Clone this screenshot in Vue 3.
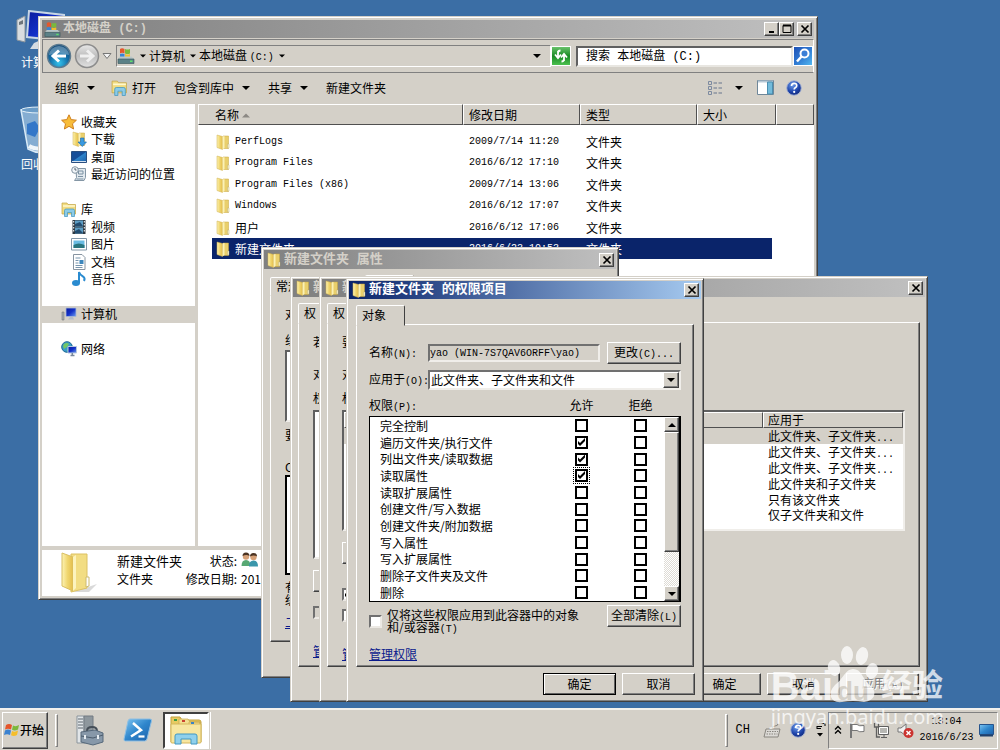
<template>
  <!-- Shared icon shapes -->
  <svg class="defs" width="0" height="0" aria-hidden="true">
    <defs>
      <linearGradient id="gFolder" x1="0" x2="1">
        <stop offset="0" stop-color="#fdf3b4" />
        <stop offset="0.5" stop-color="#f0d66f" />
        <stop offset="1" stop-color="#e3bd4c" />
      </linearGradient>
      <linearGradient id="gBlue" x1="0" y1="0" x2="1" y2="1">
        <stop offset="0" stop-color="#7fc6f2" />
        <stop offset="0.5" stop-color="#2f86cc" />
        <stop offset="1" stop-color="#1d5fa8" />
      </linearGradient>
      <linearGradient id="gScreen" x1="0" y1="0" x2="1" y2="1">
        <stop offset="0" stop-color="#0a1a9c" />
        <stop offset="0.5" stop-color="#1230c8" />
        <stop offset="1" stop-color="#6d9cf0" />
      </linearGradient>
      <radialGradient id="gBack" cx="0.5" cy="0.8" r="0.8">
        <stop offset="0" stop-color="#35c3ec" />
        <stop offset="0.5" stop-color="#146fa8" />
        <stop offset="1" stop-color="#0f4573" />
      </radialGradient>
      <linearGradient id="gGrey" x1="0" y1="0" x2="0" y2="1">
        <stop offset="0" stop-color="#e8e8e8" />
        <stop offset="0.5" stop-color="#bdbdbd" />
        <stop offset="1" stop-color="#e2e2e2" />
      </linearGradient>
      <radialGradient id="gHelp" cx="0.4" cy="0.3" r="0.8">
        <stop offset="0" stop-color="#6b9bea" />
        <stop offset="0.6" stop-color="#1c41a8" />
        <stop offset="1" stop-color="#10246c" />
      </radialGradient>
    </defs>
    <symbol id="folder" viewBox="0 0 16 16">
      <path d="M8 2h5.500v12.500H7z" fill="#e9cf6c" stroke="#c9a63c" stroke-width="0.500" />
      <path d="M2 1l5.500 1.500v13L2 13.500z" fill="url(#gFolder)" stroke="#cfae4b" stroke-width="0.500" />
      <path d="M7.500 2.500L9.500 2v12l-2 1.500z" fill="#fbf1b5" />
      <path d="M12.500 10h1.500v4h-1.500z" fill="#f8f3d3" stroke="#b9a765" stroke-width="0.400" />
    </symbol>
    <symbol id="library" viewBox="0 0 16 16">
      <path d="M1 2h5l1 1.500h7.500V13H1z" fill="#f2dc81" stroke="#c3a343" stroke-width="0.700" />
      <path d="M2 5h12" stroke="#fff8cf" stroke-width="1.500" />
      <path d="M3.500 15.500V9.500q0-1.500 1.500-1.500h7q1.500 0 1.500 1.500v6h-3v-4H6.500v4z" fill="#8bcbe8" stroke="#3f94bd" stroke-width="0.700" />
    </symbol>
    <symbol id="drive" viewBox="0 0 18 18">
      <path d="M3 2q2-1.500 4.500 0v4.500Q5 5 3 6.500z" fill="#e4572b" />
      <path d="M8 2q2.500 1 5 0v4.500q-2.500 1-5 0z" fill="#7ab93b" />
      <path d="M3 7q2-1 4.500 0v4q-2.500-1-4.500 0z" fill="#3a83d2" />
      <path d="M8 7q2.500 1 5 0v4q-2.500 1-5 0z" fill="#f3bd2c" />
      <path d="M1 12l2-2.500h11.500L17 12z" fill="#b9c6c7" />
      <path d="M1 12h16v4.500H1z" fill="#5c8187" stroke="#36565c" stroke-width="0.600" />
      <path d="M13 13.500h2.500v1.500H13z" fill="#5be36a" />
    </symbol>
    <symbol id="computer" viewBox="0 0 16 16">
      <path d="M1 6h2v8H1z" fill="#a9adb0" stroke="#686c70" stroke-width="0.500" />
      <path d="M5 2h10v8.500H5z" fill="url(#gScreen)" stroke="#a4b6d4" stroke-width="0.800" />
      <path d="M9 11h3l1 2.500H7z" fill="#b4bcc8" />
    </symbol>
    <symbol id="help" viewBox="0 0 16 16">
      <circle cx="8" cy="8" r="7.300" fill="url(#gHelp)" stroke="#a7b4d4" />
      <path d="M5.500 6q0-2.700 2.600-2.700T10.700 5.700Q10.700 7 9.200 7.700 8.200 8.200 8.200 9.600" fill="none" stroke="#fff" stroke-width="1.700" />
      <circle cx="8.200" cy="11.900" r="1.100" fill="#fff" />
    </symbol>
    <symbol id="cross" viewBox="0 0 10 10">
      <path d="M1.500 1.500l7 7M8.500 1.500l-7 7" stroke="#000" stroke-width="1.700" />
    </symbol>
    <symbol id="down" viewBox="0 0 8 8">
      <path d="M0 2h8L4 6z" fill="#000" />
    </symbol>
  </svg>

  <main class="desktop">
    <a class="shortcut" href="#">
      <svg width="50" height="42" viewBox="0 0 50 42">
        <path d="M1 10l8-4v26l-8-2z" fill="#d9dde0" stroke="#8b959d" />
        <path d="M3 12l4-2v4l-4 1z" fill="#6d757b" />
        <path d="M13 1l35 4v26l-37-4z" fill="url(#gScreen)" stroke="#c7d6e5" stroke-width="2" />
        <path d="M18 33q8-5 16 0l4 6H14z" fill="#d5dce2" />
      </svg>
      <span>计算机</span>
    </a>
    <a class="shortcut bin" href="#">
      <svg width="50" height="48" viewBox="0 0 50 48">
        <path d="M5 4h36l-7 41q-11 4-22-2z" fill="#a5c8e5" fill-opacity="0.700" stroke="#d8eaf7" stroke-width="1.500" />
        <ellipse cx="23" cy="4" rx="18" ry="3" fill="#6c9dc8" stroke="#e4f1fa" />
        <path d="M11 18l8-3 5 7-5 9-8-3z" fill="#3477c8" />
        <path d="M13 40q6 4 20 2" stroke="#f0f6fa" stroke-width="4" fill="none" />
      </svg>
      <span>回收站</span>
    </a>

    <!-- Explorer -->
    <section class="window explorer">
      <header class="titlebar">
        <svg width="17" height="17"><use href="#drive" /></svg>
        <h1>本地磁盘 (C:)</h1>
        <button class="cap" aria-label="最小化"><svg width="10" height="10"><path d="M2 8h5" stroke="#000" stroke-width="2" /></svg></button>
        <button class="cap" aria-label="最大化"><svg width="10" height="10"><path d="M1 1.500h8v7H1z" fill="none" stroke="#000" /><path d="M1 1.500h8" stroke="#000" stroke-width="2" /></svg></button>
        <button class="cap last" aria-label="关闭"><svg width="10" height="10"><use href="#cross" /></svg></button>
      </header>

      <div class="address-row">
        <div class="nav-buttons">
          <button class="round" aria-label="后退">
            <svg width="26" height="26" viewBox="0 0 26 26">
              <circle cx="13" cy="13" r="11.500" fill="url(#gBack)" stroke="#5c7a8f" stroke-width="1.500" />
              <path d="M3 12a10 9 0 0 1 20 0q-10-3-20 0z" fill="#fff" fill-opacity="0.300" />
              <path d="M20 13H8M13 7.500L7 13l6 5.500" fill="none" stroke="#fff" stroke-width="3" />
            </svg>
          </button>
          <button class="round" aria-label="前进">
            <svg width="26" height="26" viewBox="0 0 26 26">
              <circle cx="13" cy="13" r="11.500" fill="url(#gGrey)" stroke="#8c8c8c" stroke-width="1.500" />
              <path d="M6 13h12M13 7.500l6 5.500-6 5.500" fill="none" stroke="#efefef" stroke-width="3" />
            </svg>
          </button>
          <svg width="10" height="8" viewBox="0 0 10 8"><path d="M1 1.500h8L5 6.500z" fill="#f4f4f4" stroke="#777" /></svg>
        </div>
        <div class="address">
          <svg width="18" height="18"><use href="#drive" /></svg>
          <svg class="tri" width="6" height="6" viewBox="0 0 8 8"><use href="#down" /></svg>
          <a href="#">计算机</a>
          <svg class="tri" width="6" height="6" viewBox="0 0 8 8"><use href="#down" /></svg>
          <a href="#">本地磁盘 <span class="mono">(C:)</span></a>
          <svg class="tri" width="6" height="6" viewBox="0 0 8 8"><use href="#down" /></svg>
          <svg class="tri end" width="8" height="8"><use href="#down" /></svg>
        </div>
        <button class="refresh" aria-label="刷新">
          <svg width="18" height="18" viewBox="0 0 18 18">
            <path d="M6 4v6M3 7.500l3 3.500 3-3.500M8.500 3.500Q6 3.500 6 6" fill="none" stroke="#fff" stroke-width="1.800" />
            <path d="M12 14V8M9 10.500L12 7l3 3.500M9.500 14.500q2.500 0 2.500-2.500" fill="none" stroke="#fff" stroke-width="1.800" />
          </svg>
        </button>
        <input class="search" type="text" placeholder="搜索 本地磁盘 (C:)" aria-label="搜索" />
        <button class="search-go" aria-label="开始搜索">
          <svg width="18" height="18" viewBox="0 0 18 18">
            <circle cx="10.500" cy="6.500" r="4" fill="#3b7fd6" stroke="#fff" stroke-width="2" />
            <path d="M7.500 9.500L3 14.500" stroke="#fff" stroke-width="2.500" />
          </svg>
        </button>
      </div>

      <div class="toolbar">
        <button>组织<svg class="drop" width="8" height="8"><use href="#down" /></svg></button>
        <button class="open"><svg width="17" height="17"><use href="#library" /></svg>打开</button>
        <button>包含到库中<svg class="drop" width="8" height="8"><use href="#down" /></svg></button>
        <button>共享<svg class="drop" width="8" height="8"><use href="#down" /></svg></button>
        <button>新建文件夹</button>
        <div class="views">
          <button aria-label="更改视图">
            <svg width="16" height="14" viewBox="0 0 16 14">
              <g fill="none" stroke="#7d8aa0">
                <path d="M1.500.5h3v3h-3zM1.500 5.500h3v3h-3zM1.500 10.500h3v3h-3z" />
                <path d="M6.500 2h3.500M11.500 2H15M6.500 7h3.500M11.500 7H15M6.500 12h3.500M11.500 12H15" stroke="#66758c" />
              </g>
            </svg>
          </button>
          <svg width="8" height="8"><use href="#down" /></svg>
          <button class="pane" aria-label="预览窗格">
            <svg width="17" height="15" viewBox="0 0 17 15">
              <path d="M.5.5h16v14H.5z" fill="#fff" stroke="#6f8799" />
              <path d="M1 1.500h15" stroke="#b8c9d6" stroke-width="2" />
              <path d="M10.500 2h5v12h-5z" fill="#73bbdb" stroke="#4b8fb0" />
            </svg>
          </button>
          <button aria-label="帮助"><svg width="16" height="16"><use href="#help" /></svg></button>
        </div>
      </div>

      <div class="explorer-body">
        <nav class="tree">
          <template v-for="item in tree" :key="item.name">
            <div v-if="item.first" class="space"></div>
            <a href="#" :class="{ child: item.child, current: item.current }">
              <svg width="16" height="16" viewBox="0 0 16 16">
                <path v-if="item.icon === 'star'" d="M8 .8l2.200 4.800 5.200.6-3.900 3.600 1.100 5.200L8 12.300 3.400 15l1.100-5.200L.6 6.200l5.200-.6z" fill="#f8bd3a" stroke="#cf7f1d" />
                <g v-else-if="item.icon === 'download'">
                  <use href="#folder" />
                  <path d="M9.500 7h3.500v4h2.500l-4.200 4.500L7 11h2.500z" fill="#3a9ae0" stroke="#1e68a5" stroke-width="0.600" />
                </g>
                <g v-else-if="item.icon === 'desktop'">
                  <path d="M.5 2.500h15v11H.5z" fill="url(#gBlue)" stroke="#2a4f80" />
                  <path d="M1 3h14L2 12H1z" fill="#164f99" />
                  <path d="M1 12.500h14" stroke="#d3e1ef" />
                </g>
                <g v-else-if="item.icon === 'recent'">
                  <path d="M5 2.500h9.500v9L13 14.500H3.500l2-3z" fill="#e2e9ee" stroke="#8496a5" />
                  <path d="M7.500 5h4.500v3H7.500zM7 10.500h5M5.500 13h7" fill="none" stroke="#7b91a3" />
                  <circle cx="4" cy="4" r="3.300" fill="#f1f5f8" stroke="#8394a2" />
                  <path d="M4 2v2h1.500" fill="none" stroke="#50616e" />
                </g>
                <use v-else-if="item.icon === 'library'" href="#library" />
                <g v-else-if="item.icon === 'video'">
                  <path d="M1.500 1h13v14h-13z" fill="#2e3943" />
                  <path d="M4 1.500h8v6H4zM4 8.500h8v6H4z" fill="#5c9cc3" />
                  <path d="M4 5l5-2 3 4H4zM4 12l4-2 4 4H4z" fill="#234d70" />
                  <path d="M2.700 2v12M13.300 2v12" stroke="#fff" stroke-dasharray="1.500 1.500" />
                </g>
                <g v-else-if="item.icon === 'picture'">
                  <path d="M.5 2.500h15v11.500H.5z" fill="#fff" stroke="#8397a8" />
                  <path d="M2.500 4.500h11v7.500h-11z" fill="#69bbe3" />
                  <path d="M2.500 9q5-3 11 0v3h-11z" fill="#28757f" />
                </g>
                <g v-else-if="item.icon === 'document'">
                  <path d="M2.500.5H11l3 3v12H2.500z" fill="#fff" stroke="#8794a1" />
                  <path d="M4.500 4h5M4.500 6.500h3M4.500 9h3M4.500 11.500h7M4.500 13.500h7" stroke="#7895ad" />
                  <path d="M8.500 6h4v4h-4z" fill="#3d87bd" />
                </g>
                <g v-else-if="item.icon === 'music'">
                  <ellipse cx="5" cy="12" rx="4" ry="3" fill="#2a8bd0" />
                  <path d="M8 12V1q1 3 4 4.500 2.500 1.500 1 4.500" fill="none" stroke="#2a8bd0" stroke-width="2" />
                </g>
                <use v-else-if="item.icon === 'computer'" href="#computer" />
                <g v-else>
                  <circle cx="6" cy="6" r="5.300" fill="#3a9bc9" stroke="#1d6a93" />
                  <path d="M3 3q3-2 5 0L6 6 3 8 2 5zM6 8l3 1-2 2z" fill="#73c765" />
                  <path d="M7 5.500h8.500V12H7z" fill="url(#gScreen)" stroke="#b6c8de" />
                  <path d="M9.500 14.500h4M11.300 12v2" stroke="#78889c" stroke-width="1.500" />
                </g>
              </svg>
              {{ item.name }}
            </a>
          </template>
        </nav>

        <table class="files">
          <colgroup>
            <col class="c-name" />
            <col class="c-date" />
            <col class="c-type" />
            <col class="c-size" />
            <col />
          </colgroup>
          <thead>
            <tr>
              <th>名称 <svg width="8" height="5" viewBox="0 0 8 5"><path d="M0 4.500h8L4 .5z" fill="#8c8984" /></svg></th>
              <th>修改日期</th>
              <th>类型</th>
              <th>大小</th>
              <th></th>
            </tr>
          </thead>
          <tbody>
            <tr v-for="file in files" :key="file.name" :class="{ selected: file.selected }">
              <td>
                <div class="file-name">
                  <svg width="16" height="16"><use href="#folder" /></svg>
                  <span :class="{ mono: file.latin }">{{ file.name }}</span>
                </div>
              </td>
              <td class="mono">{{ file.date }}</td>
              <td>文件夹</td>
              <td></td>
              <td></td>
            </tr>
          </tbody>
        </table>
      </div>

      <footer class="details">
        <svg width="40" height="42" viewBox="0 0 40 42">
          <path d="M26 36l12-4-8 8H14z" fill="#000" fill-opacity="0.150" />
          <path d="M12 2h16v34L12 40z" fill="#f2dd83" stroke="#dcc162" />
          <path d="M3 1l11 4v34L3 34z" fill="url(#gFolder)" stroke="#d9bf63" />
          <path d="M14 5l3-2v33l-3 3z" fill="#fcf3be" />
          <path d="M27 25h3v9l-3 1z" fill="#fff" stroke="#cdbb70" />
        </svg>
        <div class="detail-names">
          <strong>新建文件夹</strong>
          <span>文件夹</span>
        </div>
        <dl>
          <dt>状态:</dt>
          <dd>
            <svg width="18" height="16" viewBox="0 0 18 16">
              <circle cx="5" cy="4.500" r="3.200" fill="#d6a178" />
              <path d="M1.500 4q0-3.500 3.500-3.500T8.500 4q-3-2-7 0z" fill="#4b3323" />
              <path d="M.5 14q0-6 4.500-6t4.500 6z" fill="#57a873" />
              <circle cx="12.500" cy="5" r="3.200" fill="#d6a178" />
              <path d="M9 4.500Q9 1 12.500 1T16 4.500q-3-2-7 0z" fill="#4b3323" />
              <path d="M8 14.500q0-6 4.500-6t4.500 6z" fill="#3a96ab" />
            </svg>
          </dd>
          <dt>修改日期:</dt>
          <dd>2016</dd>
        </dl>
      </footer>
    </section>

    <!-- Folder properties -->
    <section class="window props">
      <header class="titlebar">
        <svg width="16" height="16"><use href="#folder" /></svg>
        <h2>新建文件夹 属性</h2>
        <button class="cap last" aria-label="关闭"><svg width="10" height="10"><use href="#cross" /></svg></button>
      </header>
      <div class="tabs">
        <button class="tab">常规</button>
        <button class="tab raised" aria-label="安全"></button>
      </div>
      <div class="sheet">
        <p class="p-object">对象</p>
        <p>组</p>
        <div class="well users"></div>
        <p class="p-edit">要</p>
        <p class="p-perm">CR</p>
        <div class="well perms"></div>
        <p class="tight">有关<br />级别</p>
        <a class="link" href="#">二</a>
      </div>
    </section>

    <!-- Advanced security, two stacked copies -->
    <section class="window advanced back">
      <header class="titlebar">
        <svg width="16" height="16"><use href="#folder" /></svg>
        <h2>新</h2>
      </header>
      <div class="tabs"><button class="tab">权</button></div>
      <div class="sheet">
        <p class="a-first">若</p>
        <p class="a-second">对</p>
        <p>权</p>
        <div class="well entries"></div>
        <button class="push edit" aria-label="更改权限"></button>
        <input class="dim" type="checkbox" disabled aria-label="包括可从该对象的父项继承的权限" />
        <a class="link" href="#">管</a>
      </div>
    </section>

    <section class="window advanced front">
      <header class="titlebar">
        <svg width="16" height="16"><use href="#folder" /></svg>
        <h2>新</h2>
        <button class="cap last" aria-label="关闭"><svg width="10" height="10"><use href="#cross" /></svg></button>
      </header>
      <div class="tabs"><button class="tab">权</button></div>
      <div class="sheet">
        <p class="a-first">要</p>
        <p class="a-second">对</p>
        <p>权</p>
        <div class="well entries">
          <table>
            <thead>
              <tr><th class="wide"></th><th>应用于</th></tr>
            </thead>
            <tbody>
              <tr v-for="(scope, i) in scopes" :key="i" :class="{ picked: i === 0 }">
                <td></td>
                <td>{{ scope.text }}<span v-if="scope.more" class="mono">...</span></td>
              </tr>
            </tbody>
          </table>
        </div>
        <button class="push edit" aria-label="添加"></button>
        <input type="checkbox" checked aria-label="包括继承的权限" />
        <input type="checkbox" aria-label="替换子对象权限" />
        <a class="link" href="#">管</a>
      </div>
      <div class="actions">
        <button class="push">确定</button>
        <button class="push">取消</button>
        <button class="push" disabled>应用<span class="mono">(A)</span></button>
      </div>
    </section>

    <!-- Permission entry -->
    <section class="window entry">
      <header class="titlebar active">
        <svg width="16" height="16"><use href="#folder" /></svg>
        <h2>新建文件夹 的权限项目</h2>
        <button class="cap last" aria-label="关闭"><svg width="10" height="10"><use href="#cross" /></svg></button>
      </header>
      <div class="tabs"><button class="tab">对象</button></div>
      <div class="sheet">
        <div class="field">
          <label for="name">名称<span class="mono">(N):</span></label>
          <input id="name" type="text" value="yao (WIN-7S7QAV6ORFF\yao)" readonly />
          <button class="push">更改<span class="mono">(C)...</span></button>
        </div>
        <div class="field second">
          <label for="scope">应用于<span class="mono">(O):</span></label>
          <div class="combo">
            <select id="scope">
              <option>此文件夹、子文件夹和文件</option>
            </select>
            <span class="combo-arrow"><svg width="8" height="8"><use href="#down" /></svg></span>
          </div>
        </div>
        <div class="perm-head">
          <span>权限<span class="mono">(P):</span></span>
          <span class="col">允许</span>
          <span class="col">拒绝</span>
        </div>
        <div class="perm-box">
          <table>
            <tbody>
              <tr v-for="perm in permissions" :key="perm.name">
                <th scope="row">{{ perm.name }}</th>
                <td>
                  <input
                    v-model="perm.allow"
                    type="checkbox"
                    :class="{ focused: perm.focused }"
                    :aria-label="perm.name + ' 允许'"
                  />
                </td>
                <td><input v-model="perm.deny" type="checkbox" :aria-label="perm.name + ' 拒绝'" /></td>
              </tr>
            </tbody>
          </table>
          <div class="scrollbar">
            <button aria-label="向上"><svg class="flip" width="8" height="8"><use href="#down" /></svg></button>
            <div class="thumb"></div>
            <button aria-label="向下"><svg width="8" height="8"><use href="#down" /></svg></button>
          </div>
        </div>
        <div class="apply-row">
          <input id="only" type="checkbox" />
          <label for="only">仅将这些权限应用到此容器中的对象<br />和/或容器<span class="mono">(T)</span></label>
          <button class="push">全部清除<span class="mono">(L)</span></button>
        </div>
        <a class="link" href="#">管理权限</a>
      </div>
      <div class="actions">
        <button class="push default">确定</button>
        <button class="push">取消</button>
      </div>
    </section>

    <!-- Taskbar -->
    <footer class="taskbar">
      <button class="start">
        <svg width="16" height="16" viewBox="0 0 16 16">
          <path d="M2 3q3-2 6 0L7 7.500Q4 6 1 7.500z" fill="#e5552a" />
          <path d="M9 3.500q3 1.500 6-.5l-1 4.500q-3 2-6 .3z" fill="#7cb83a" />
          <path d="M1 8.500q3-2 6 0L6 13Q3 11.500 0 13z" fill="#3b82d0" />
          <path d="M8 9q3 1.500 6-.5L13 13q-3 2-6 .3z" fill="#f5be2b" />
        </svg>
        开始
      </button>
      <div class="grip"></div>
      <button class="quick server" aria-label="服务器管理器">
        <svg width="30" height="32" viewBox="0 0 30 32">
          <path d="M2 2h7v27H2z" fill="#e1e5e8" stroke="#8b959c" />
          <path d="M9 2h9v25l-9 2z" fill="#8e979d" stroke="#727b82" />
          <path d="M3 5h5M3 8h5M3 11h5M3 14h5" stroke="#5c666e" />
          <path d="M12 17q0-4 5-4t5 4" fill="none" stroke="#454e57" stroke-width="2" />
          <path d="M6 18l14-2 8 3v9l-10 3-12-3z" fill="#8798a9" stroke="#56687a" />
          <path d="M6 22l12 2 10-3" fill="none" stroke="#4c5c6c" />
          <path d="M10 21v4M23 21v4" stroke="#e5ebf0" stroke-width="2" />
        </svg>
      </button>
      <button class="quick" aria-label="PowerShell">
        <svg width="30" height="26" viewBox="0 0 30 26">
          <path d="M7 2h20q2 0 1.500 2L24 22q-.5 2-2.500 2h-19Q.5 24 1 22L5 4q.5-2 2-2z" fill="url(#gBlue)" stroke="#8fbfe3" />
          <path d="M10 6l8 7-10 6.500" fill="none" stroke="#fff" stroke-width="2.500" />
          <path d="M15.500 19.500h6" stroke="#fff" stroke-width="2.200" />
        </svg>
      </button>
      <button class="quick running" aria-label="资源管理器">
        <svg width="34" height="30" viewBox="0 0 34 30">
          <path d="M2 2h9l2 3h17q2 0 2 2v20H2z" fill="#e8cb62" stroke="#c2a13f" />
          <path d="M10 4h9l2 3h10v4H10zM20 7h11v4H20z" fill="#f3df91" stroke="#c6a84d" stroke-width="0.700" />
          <path d="M2 9h30v18q0 1-1 1H3q-1 0-1-1z" fill="#f7e6a0" stroke="#d4b75c" />
          <path d="M5 4h3v2H5z" fill="#3e9b42" /><path d="M13 5h3v2h-3z" fill="#cb4331" /><path d="M22 7h3v2h-3z" fill="#3c83c4" />
          <path d="M6 29v-8q0-2 2-2h18q2 0 2 2v8h-6v-5H12v5z" fill="#8fd0ec" stroke="#4298c2" />
        </svg>
      </button>

      <div class="tray">
        <div class="grip"></div>
        <span class="mono lang">CH</span>
        <button aria-label="键盘">
          <svg width="18" height="15" viewBox="0 0 18 15">
            <path d="M3 6h14l-2 8H1z" fill="#dcdad6" stroke="#88857f" />
            <path d="M4 8.500h11M3.500 11h11" stroke="#88857f" stroke-dasharray="1.500 1" />
            <path d="M9 6q0-3 3-3t3-2.500" fill="none" stroke="#88857f" />
          </svg>
        </button>
        <button class="tray-help" aria-label="帮助"><svg width="16" height="16"><use href="#help" /></svg></button>
        <svg class="lang-opts" width="10" height="16" viewBox="0 0 10 16">
          <path d="M3 1.500h6M9 1v3M1 4.500h5M1 4v3M1 6.500h4" fill="none" stroke="#000" />
          <path d="M1 11h6l-3 3.500z" fill="#000" />
        </svg>
        <div class="notify">
          <svg width="8" height="10" viewBox="0 0 8 10"><path d="M1 4.500L4 1.500l3 3M1 8.500l3-3 3 3" fill="none" stroke="#000" stroke-width="1.300" /></svg>
          <svg class="flag" width="17" height="17" viewBox="0 0 17 17">
            <path d="M2 1v15" stroke="#777" stroke-width="2" />
            <path d="M3 2.500h5q2 2 7 1v6q-5 1-7-1H3z" fill="#fff" stroke="#777" />
          </svg>
          <svg class="net" width="17" height="17" viewBox="0 0 17 17">
            <path d="M5.500 4.500h10v8h-10z" fill="#b7b7b3" stroke="#5f5f5f" />
            <path d="M6.500 5.500h8v6h-8z" fill="none" stroke="#fff" />
            <path d="M8 15.500h6M11 13v2" stroke="#5f5f5f" />
            <path d="M1.500 1v4h4V1M3.500 5v10H7" fill="none" stroke="#5f5f5f" stroke-width="1.300" />
          </svg>
          <svg class="vol" width="17" height="17" viewBox="0 0 17 17">
            <path d="M1 6h3l5-4v12l-5-4H1z" fill="#f2f2f2" stroke="#777" />
            <circle cx="11.500" cy="11" r="5" fill="#cb3430" />
            <path d="M9.500 9l4 4M13.500 9l-4 4" stroke="#fff" stroke-width="1.500" />
          </svg>
          <div class="clock mono"><span>13:04</span><span>2016/6/23</span></div>
          <svg width="15" height="13" viewBox="0 0 15 13">
            <path d="M.5.5h14v10H.5z" fill="url(#gBlue)" stroke="#27548c" />
            <path d="M1 11.500h13" stroke="#20406b" stroke-width="2" />
          </svg>
        </div>
      </div>
    </footer>

    <!-- Watermark -->
    <div class="watermark">
      <div class="brand">
        <span>Bai</span>
        <div class="paw">
          <svg width="52" height="58" viewBox="0 0 52 58">
            <g fill="#fff">
              <ellipse cx="7" cy="22" rx="6" ry="8" transform="rotate(-15 7 22)" />
              <ellipse cx="20" cy="9" rx="6" ry="9" />
              <ellipse cx="35" cy="10" rx="6" ry="9" transform="rotate(12 35 10)" />
              <ellipse cx="45" cy="25" rx="6" ry="8" transform="rotate(15 45 25)" />
              <path d="M26 23q6 0 9 6t8 10q6 6 4 11t-10 6q-11-2-22 0-9 1-11-5t4-12q5-4 9-10t9-6z" />
            </g>
          </svg>
          <span>du</span>
        </div>
        <span class="cn">经验</span>
      </div>
      <div class="site">jingyan.baidu.com</div>
    </div>
  </main>
</template>

<script setup>
import { reactive } from 'vue'

/**
 * Navigation tree; `first` opens a new group.
 */
const tree = [
  { name: '收藏夹', icon: 'star' },
  { name: '下载', icon: 'download', child: true },
  { name: '桌面', icon: 'desktop', child: true },
  { name: '最近访问的位置', icon: 'recent', child: true },
  { name: '库', icon: 'library', first: true },
  { name: '视频', icon: 'video', child: true },
  { name: '图片', icon: 'picture', child: true },
  { name: '文档', icon: 'document', child: true },
  { name: '音乐', icon: 'music', child: true },
  { name: '计算机', icon: 'computer', first: true, current: true },
  { name: '网络', icon: 'network', first: true }
]

const files = [
  { name: 'PerfLogs', date: '2009/7/14 11:20', latin: true },
  { name: 'Program Files', date: '2016/6/12 17:10', latin: true },
  { name: 'Program Files (x86)', date: '2009/7/14 13:06', latin: true },
  { name: 'Windows', date: '2016/6/12 17:07', latin: true },
  { name: '用户', date: '2016/6/12 17:06' },
  { name: '新建文件夹', date: '2016/6/23 10:53', selected: true }
]

const scopes = [
  { text: '此文件夹、子文件夹', more: true },
  { text: '此文件夹、子文件夹', more: true },
  { text: '此文件夹、子文件夹', more: true },
  { text: '此文件夹和子文件夹' },
  { text: '只有该文件夹' },
  { text: '仅子文件夹和文件' }
]

/**
 * Rows of the permission list.
 */
const permissions = reactive([
  { name: '完全控制', allow: false, deny: false },
  { name: '遍历文件夹/执行文件', allow: true, deny: false },
  { name: '列出文件夹/读取数据', allow: true, deny: false },
  { name: '读取属性', allow: true, deny: false, focused: true },
  { name: '读取扩展属性', allow: false, deny: false },
  { name: '创建文件/写入数据', allow: false, deny: false },
  { name: '创建文件夹/附加数据', allow: false, deny: false },
  { name: '写入属性', allow: false, deny: false },
  { name: '写入扩展属性', allow: false, deny: false },
  { name: '删除子文件夹及文件', allow: false, deny: false },
  { name: '删除', allow: false, deny: false }
])
</script>

<style>
body {
  margin: 0;
  overflow: hidden;
}
</style>

<style scoped>
.desktop {
  position: relative;
  display: flex;
  flex-direction: column;
  height: 100vh;
  overflow: hidden;
  background: #3b6ea5;
  color: #000;
  font-family: "Noto Sans CJK SC", "Liberation Sans", sans-serif;
  font-size: 12px;
  line-height: 16px;
}
.desktop * {
  box-sizing: border-box;
}
.defs {
  position: absolute;
}
svg {
  flex: none;
  display: block;
}
h1,
h2,
p,
dl,
dd {
  margin: 0;
}
a {
  color: inherit;
  text-decoration: none;
}
button,
input,
select {
  margin: 0;
  padding: 0;
  border: 0;
  border-radius: 0;
  background: transparent;
  color: inherit;
  font: inherit;
}
.mono {
  font-family: "Liberation Mono", monospace;
  font-size: 10px;
}

/* Desktop shortcuts */
.shortcut {
  position: absolute;
  left: 16px;
  top: 10px;
  display: flex;
  flex-direction: column;
  gap: 2px;
  color: #fff;
}
.shortcut span {
  padding-left: 5px;
}
.shortcut.bin {
  top: 106px;
}

/* Window chrome */
.window {
  position: absolute;
  isolation: isolate;
  display: flex;
  flex-direction: column;
  padding: 2px;
  border: 1px solid;
  border-color: #d4d0c8 #404040 #404040 #d4d0c8;
  background: #d4d0c8;
  box-shadow: inset 1px 1px #fff, inset -1px -1px #808080;
}
.titlebar {
  display: flex;
  flex: none;
  align-items: center;
  gap: 2px;
  height: 18px;
  padding: 0 2px;
  background: linear-gradient(90deg, #808080, #c0c0c0);
  color: #d4d0c8;
}
.titlebar.active {
  background: linear-gradient(90deg, #0a246a, #a6caf0);
  color: #fff;
}
.titlebar h1,
.titlebar h2 {
  flex: 1;
  font-family: "Liberation Mono", "Noto Sans CJK SC", monospace;
  font-size: 13px;
  font-weight: 700;
  line-height: 18px;
  white-space: nowrap;
}
.titlebar h1 {
  font-size: 12px;
}
.cap {
  display: flex;
  align-items: center;
  justify-content: center;
  width: 15px;
  height: 14px;
  margin-left: -2px;
}
.cap.last {
  margin-left: 1px;
}
.cap,
.push,
.combo-arrow,
.scrollbar button,
.thumb {
  border: 1px solid;
  border-color: #fff #404040 #404040 #fff;
  background: #d4d0c8;
  box-shadow: inset -1px -1px #808080;
}

/* Explorer */
.explorer {
  left: 38px;
  top: 16px;
  width: 780px;
  height: 584px;
  padding: 3px;
}
.address-row {
  display: flex;
  flex: none;
  align-items: center;
  height: 34px;
  margin-top: 1px;
  padding-left: 3px;
  border: 1px solid;
  border-color: #808080 #fff #808080 #808080;
}
.nav-buttons {
  display: flex;
  align-items: center;
  gap: 2px;
  margin-right: 4px;
}
.address {
  display: flex;
  flex: 1;
  align-items: center;
  height: 22px;
  padding-right: 9px;
  border: 1px solid;
  border-color: #808080 #fff #fff #808080;
}
.address a {
  padding: 0 5px 0 3px;
  white-space: nowrap;
}
.address svg + .tri {
  margin-left: 5px;
}
.address .tri + .tri.end {
  margin-left: auto;
}
.refresh,
.search-go {
  display: flex;
  flex: none;
  width: 20px;
  height: 20px;
  padding: 0;
  border: 1px solid #fff;
  background: linear-gradient(#69c26b, #188a24 50%, #4cc04f);
}
.search {
  width: 217px;
  height: 21px;
  margin-left: 5px;
  padding: 2px 0 0 8px;
  border: 2px solid;
  border-color: #606060 #e8e6e1 #e8e6e1 #606060;
  background: #fff;
  font-family: "Liberation Mono", "Noto Sans CJK SC", monospace;
}
.search::placeholder {
  color: #000;
  opacity: 1;
}
.search-go {
  background: linear-gradient(135deg, #1d50b4, #2f79d2 50%, #51b7ef);
}
.toolbar {
  display: flex;
  flex: none;
  align-items: center;
  gap: 18px;
  height: 31px;
  padding: 0 12px 2px 13px;
}
.toolbar button {
  display: flex;
  align-items: center;
  white-space: nowrap;
}
.toolbar .drop {
  margin-left: 8px;
}
.toolbar .open {
  gap: 4px;
  margin-left: -2px;
}
.views {
  display: flex;
  align-items: center;
  gap: 12px;
  margin-left: auto;
}
.views .pane {
  margin-left: 2px;
}
.explorer-body {
  display: flex;
  flex: 1;
  min-height: 0;
  background: #fff;
}
.tree {
  display: grid;
  grid-template-rows: repeat(14, 1fr);
  flex: none;
  width: 156px;
  padding: 9px 0 188px;
  border-right: 3px solid #d4d0c8;
}
.tree a {
  display: flex;
  align-items: center;
  gap: 4px;
  padding-left: 19px;
  white-space: nowrap;
}
.tree a.child {
  padding-left: 29px;
}
.tree .current {
  background: #d4d0c8;
}
.files {
  flex: 1;
  align-self: flex-start;
  table-layout: fixed;
  width: 100%;
  border-collapse: separate;
  border-spacing: 0;
}
.c-name {
  width: 265px;
}
.c-date,
.c-type {
  width: 117px;
}
.c-size {
  width: 79px;
}
.files th {
  height: 21px;
  padding: 0 0 0 5px;
  border: 1px solid;
  border-color: #fff #505050 #505050 #fff;
  background: #d4d0c8;
  font-weight: 400;
  text-align: left;
}
.files th:first-child {
  padding-left: 16px;
}
.files th svg {
  display: inline-block;
  vertical-align: 2px;
}
.files tbody::before {
  content: '';
  display: block;
  height: 6px;
}
.files td {
  height: 21px;
  padding: 0 0 0 6px;
  line-height: 16px;
}
.files tr:nth-child(even) td {
  height: 22px;
}
.files tr:last-child td {
  height: 21px;
}
.files td:first-child {
  padding: 0 0 0 14px;
}
.files td:nth-child(4) {
  padding: 0 4px 0 0;
}
.file-name {
  display: flex;
  align-items: center;
  gap: 4px;
  height: 21px;
  padding-left: 3px;
}
.selected {
  color: #fff;
}
.selected td:nth-child(-n + 4),
.selected .file-name {
  background: #0a246a;
}
.files .selected td:first-child {
  background: #fff;
}
.files .selected td:nth-child(4) {
  background-clip: content-box;
}
.details {
  display: flex;
  flex: none;
  align-items: flex-start;
  height: 50px;
  padding: 2px 0 0 17px;
  border-top: 4px solid #d4d0c8;
  background: #fff;
}
.detail-names {
  display: flex;
  flex-direction: column;
  width: 66px;
  margin-left: 18px;
  line-height: 18px;
}
.detail-names strong {
  font-size: 13px;
  font-weight: 400;
  white-space: nowrap;
}
.details dl {
  display: grid;
  grid-template-columns: 54px 30px;
  column-gap: 4px;
  line-height: 18px;
  white-space: nowrap;
}
.details dt {
  text-align: right;
}

/* Tab sheets */
.tabs {
  display: flex;
  flex: none;
  align-items: flex-end;
  margin: 6px 7px 0;
}
.tab {
  position: relative;
  z-index: 1;
  min-width: 49px;
  height: 21px;
  margin-bottom: -2px;
  padding: 0 5px 2px;
  border: 1px solid;
  border-color: #fff #404040 transparent #fff;
  border-radius: 2px 2px 0 0;
  background: #d4d0c8;
  text-align: left;
}
.sheet {
  display: flex;
  flex: 1;
  flex-direction: column;
  align-items: flex-start;
  min-height: 0;
  margin: 0 7px;
  padding-left: 14px;
  border: 1px solid;
  border-color: #fff #404040 #404040 #fff;
  box-shadow: inset -1px -1px #808080;
}
.actions {
  display: flex;
  flex: none;
  justify-content: flex-end;
  gap: 6px;
  padding: 6px 6px 4px;
}
.push {
  height: 22px;
  padding: 0;
  white-space: nowrap;
}
.actions .push {
  width: 73px;
}
.push.default {
  border-color: #000;
  box-shadow: inset 1px 1px #fff, inset -1px -1px #606060;
}
.push:disabled {
  color: #808080;
  text-shadow: 1px 1px #fff;
}
.well {
  flex: none;
  align-self: stretch;
  border: 2px solid;
  border-color: #606060 #f0eeea #f0eeea #606060;
  background: #fff;
}
.link {
  color: #0a1a8c;
  text-decoration: underline;
}
input[type="checkbox"] {
  appearance: none;
  display: block;
  flex: none;
  width: 13px;
  height: 13px;
  border: 2px solid;
  border-color: #707070 #ece9e4 #ece9e4 #707070;
  background: #fff;
}
input[type="checkbox"]:checked::before {
  content: '';
  display: block;
  width: 9px;
  height: 9px;
  background: #000;
  clip-path: polygon(1px 3px, 3px 5px, 8px 0, 8px 3px, 3px 8px, 1px 6px);
}
input.dim {
  background: #d4d0c8;
}

/* Folder properties */
.props {
  left: 261px;
  top: 247px;
  width: 358px;
  height: 431px;
}
.props .titlebar {
  height: 19px;
}
.props .tabs {
  margin-left: 6px;
}
.props .tab {
  height: 19px;
}
.props .raised {
  width: 48px;
  height: 21px;
  margin-left: 46px;
}
.props .sheet {
  flex: none;
  height: 348px;
  margin-left: 6px;
}
.p-object {
  margin: 11px 0 10px;
}
.users {
  height: 72px;
  margin-top: 2px;
}
.p-edit {
  margin: 5px 0 16px;
}
.perms {
  height: 100px;
  border-color: #000;
}
.tight {
  padding-top: 5px;
  line-height: 13px;
}
.props .link {
  margin-top: 8px;
}

/* Advanced security */
.advanced {
  width: 609px;
  height: 426px;
}
.advanced .tabs {
  margin-left: 5px;
}
.advanced .sheet {
  margin: 0 5px;
  padding-right: 14px;
}
.advanced.back {
  left: 290px;
  top: 276px;
}
.advanced.back .sheet {
  margin-bottom: 32px;
}
.advanced.front {
  left: 319px;
  top: 276px;
}
.a-first {
  margin-top: 11px;
}
.a-second {
  margin: 16px 0 8px;
}
.advanced .entries {
  height: 121px;
  margin-top: 4px;
}
.advanced .edit {
  width: 74px;
  margin: 11px 0 24px;
}
.advanced input + input {
  margin-top: 8px;
}
.advanced .link {
  margin-top: 24px;
}
.advanced.back .entries {
  height: 149px;
}
.advanced.back .edit {
  margin-bottom: 14px;
}
.entries table {
  width: 100%;
  table-layout: fixed;
  border-collapse: separate;
  border-spacing: 0;
}
.entries th {
  height: 15px;
  padding: 0 0 0 4px;
  border: 1px solid;
  border-color: #fff #505050 #505050 #fff;
  background: #d4d0c8;
  font-weight: 400;
  line-height: 14px;
  text-align: left;
}
.entries th.wide {
  width: 419px;
}
.entries td {
  height: 16px;
  padding: 0 0 0 5px;
  line-height: 15px;
}
.entries tr:nth-child(even) td {
  height: 15px;
}
.entries .mono {
  line-height: 10px;
}
.picked {
  background: #d4d0c8;
}

/* Permission entry */
.entry {
  left: 346px;
  top: 278px;
  width: 358px;
  height: 424px;
}
.entry .sheet {
  padding: 17px 12px 0 12px;
}
.field {
  display: flex;
  flex: none;
  align-items: center;
  align-self: stretch;
  height: 22px;
}
.field.second {
  margin-top: 5px;
}
.field label {
  flex: none;
  width: 59px;
  white-space: nowrap;
}
.field input {
  flex: 1;
  min-width: 0;
  height: 18px;
  margin-right: 7px;
  border: 2px solid;
  border-color: #707070 #f0eeea #f0eeea #707070;
  font-family: "Liberation Mono", monospace;
  font-size: 10px;
}
.field .push {
  width: 74px;
}
.combo {
  display: flex;
  flex: 1;
  height: 20px;
  border: 2px solid;
  border-color: #707070 #f0eeea #f0eeea #707070;
  background: #fff;
}
.combo select {
  flex: 1;
  appearance: none;
  padding-left: 1px;
  line-height: 16px;
}
.combo-arrow {
  display: flex;
  align-items: center;
  justify-content: center;
  width: 16px;
}
.perm-head {
  display: flex;
  align-self: stretch;
  margin-top: 6px;
  padding-right: 11px;
}
.perm-head > span:first-child {
  flex: 1;
}
.perm-head .col {
  width: 59px;
  text-align: center;
}
.perm-box {
  display: flex;
  flex: none;
  align-self: stretch;
  border: 1px solid #000;
  border-right-width: 2px;
  background: #fff;
}
.perm-box table {
  flex: 1;
  border-collapse: collapse;
}
.perm-box th {
  height: 17px;
  padding: 0 0 0 10px;
  font-weight: 400;
  line-height: 16px;
  text-align: left;
}
.perm-box tr:nth-child(3n) th {
  height: 16px;
}
.perm-box td {
  width: 59px;
  padding: 0;
}
.perm-box td:last-child {
  width: 52px;
}
.perm-box input[type="checkbox"] {
  margin: 0 0 0 22px;
  border-color: #000;
}
.perm-box .focused {
  outline: 1px dotted #000;
  outline-offset: 1px;
}
.scrollbar {
  display: flex;
  flex-direction: column;
  width: 15px;
  background: repeating-conic-gradient(#fff 0 25%, #dedbd5 0 50%) 0 0 / 2px 2px;
}
.scrollbar button {
  display: flex;
  align-items: center;
  justify-content: center;
  height: 15px;
}
.scrollbar button:last-child {
  margin-top: auto;
}
.thumb {
  height: 120px;
}
.flip {
  transform: rotate(180deg);
}
.apply-row {
  display: flex;
  flex: none;
  align-items: flex-start;
  align-self: stretch;
  gap: 5px;
  margin-top: 3px;
}
.apply-row input {
  margin-top: 10px;
}
.apply-row label {
  flex: 1;
  padding-top: 4px;
  line-height: 12px;
  white-space: nowrap;
}
.apply-row .push {
  width: 74px;
}
.entry .link {
  margin-top: 10px;
}

/* Taskbar */
.taskbar {
  display: flex;
  align-items: center;
  height: 42px;
  margin-top: auto;
  padding: 0 2px;
  border-top: 2px solid #f4f2ee;
  background: #d4d0c8;
}
.start {
  display: flex;
  align-items: center;
  width: 46px;
  height: 37px;
  padding-left: 1px;
  border: 1px solid;
  border-color: #fff #404040 #404040 #fff;
  box-shadow: inset -1px -1px #808080;
  font-weight: 500;
  white-space: nowrap;
}
.grip {
  width: 3px;
  height: 33px;
  margin-left: 7px;
  border: 1px solid;
  border-color: #fff #808080 #808080 #fff;
}
.quick {
  display: flex;
  align-items: center;
  justify-content: center;
  width: 46px;
  height: 37px;
  margin-left: 2px;
}
.quick.server {
  margin-left: 9px;
}
.quick.running {
  border: 2px solid;
  border-color: #404040 #fff #fff #404040;
  background: #fff;
  box-shadow: 1px 0 #d4d0c8, 2px 0 #fff;
}
.tray {
  display: flex;
  align-items: center;
  margin-left: auto;
}
.tray .lang {
  margin: 0 13px 0 8px;
  font-size: 12px;
}
.tray-help {
  margin: 0 10px 0 9px;
}
.lang-opts {
  margin-right: 2px;
}
.notify {
  display: flex;
  align-items: center;
  width: 170px;
  height: 37px;
  padding-left: 5px;
  border: 1px solid;
  border-color: #808080 #fff #fff #808080;
}
.notify .flag,
.notify .net,
.notify .vol {
  margin-left: 7px;
}
.clock {
  display: flex;
  flex: 1;
  flex-direction: column;
  align-items: center;
}
.notify > svg:last-child {
  margin-right: 3px;
}

/* Watermark */
.watermark {
  position: absolute;
  right: 56px;
  bottom: 20px;
  color: #fff;
  opacity: 0.75;
  font-family: "Liberation Sans", "Noto Sans CJK SC", sans-serif;
  pointer-events: none;
}
.brand {
  display: flex;
  align-items: flex-end;
  height: 60px;
  font-size: 40px;
  font-weight: 700;
  line-height: 36px;
}
.brand .cn {
  font-size: 31px;
}
.paw {
  position: relative;
  margin: 0 2px 0 -6px;
}
.paw span {
  position: absolute;
  left: 10px;
  bottom: -2px;
  color: #d4d0c8;
  font-size: 26px;
  line-height: 30px;
}
.site {
  font-family: "Noto Sans", sans-serif;
  font-size: 20px;
  line-height: 26px;
}
</style>
